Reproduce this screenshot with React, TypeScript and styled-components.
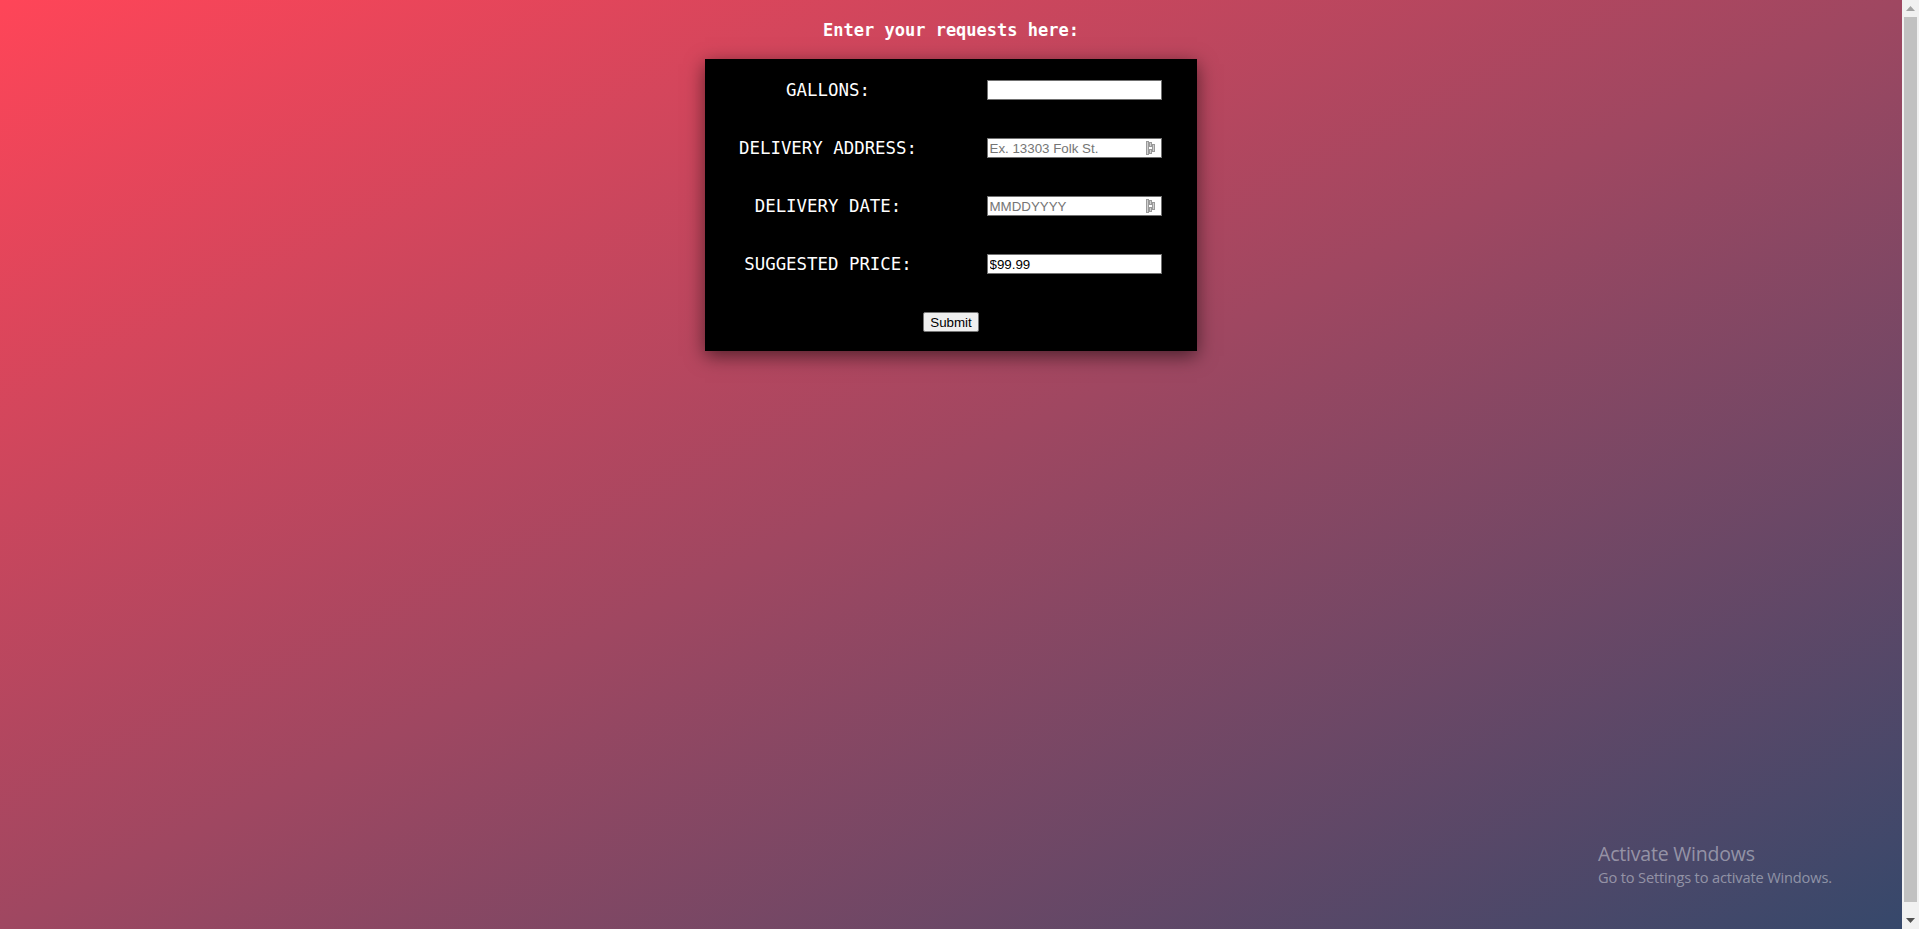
import React from "react";
import styled, { createGlobalStyle } from "styled-components";

const GlobalStyle = createGlobalStyle`
  html, body {
    margin: 0;
    padding: 0;
    height: 100%;
    overflow: hidden;
    background: #f1f1f1;
  }
`;

const Screen = styled.div`
  display: flex;
  height: 100vh;
  width: 100%;
`;

const Page = styled.main`
  flex: 1;
  display: flex;
  flex-direction: column;
  align-items: center;
  box-sizing: border-box;
  padding-top: 20px;
  background: linear-gradient(to bottom right, #ff4558 0%, #9f4761 50%, #36486b 100%);
  position: relative;
`;

const Scrollbar = styled.div`
  width: 17px;
  flex: none;
  display: flex;
  flex-direction: column;
  background: #f1f1f1;
`;

const ScrollButton = styled.div`
  height: 17px;
  display: flex;
  align-items: center;
  justify-content: center;
`;

const ScrollTrack = styled.div`
  flex: 1;
  padding: 0 2px 10px;
  display: flex;
`;

const ScrollThumb = styled.div`
  flex: 1;
  background: #c1c1c1;
`;

const Title = styled.h1`
  margin: 0;
  font-family: "DejaVu Sans Mono", "Liberation Mono", monospace;
  font-weight: 700;
  font-size: 17px;
  line-height: 20px;
  color: #ffffff;
`;

const FormBox = styled.form`
  margin-top: 19px;
  width: 492px;
  box-sizing: border-box;
  padding-top: 2px;
  background: #000000;
  box-shadow: 0 5px 18px rgba(0, 0, 0, 0.55);
  display: grid;
  grid-template-columns: 246px 246px;
  grid-auto-rows: 58px;
`;

const Label = styled.label`
  display: flex;
  align-items: center;
  justify-content: center;
  font-family: "DejaVu Sans Mono", "Liberation Mono", monospace;
  font-size: 17.4px;
  color: #ffffff;
  white-space: pre;
`;

const Cell = styled.div`
  display: flex;
  align-items: center;
  justify-content: center;
`;

const InputWrap = styled.div`
  position: relative;
  width: 175px;
  height: 20px;
`;

const Input = styled.input`
  box-sizing: border-box;
  width: 175px;
  height: 20px;
  margin: 0;
  padding: 1px 2px;
  border: 1px solid #707070;
  background: #ffffff;
  font-family: "Liberation Sans", Arial, sans-serif;
  font-size: 13.33px;
  color: #000000;
  outline: none;
  &::placeholder {
    color: #757575;
  }
`;

const FieldIcon = styled.svg`
  position: absolute;
  right: 6px;
  top: 3px;
`;

const SubmitCell = styled.div`
  grid-column: 1 / span 2;
  display: flex;
  align-items: center;
  justify-content: center;
`;

const SubmitButton = styled.button`
  box-sizing: border-box;
  width: 56px;
  height: 20px;
  margin: 0;
  padding: 0 6px;
  border: 1px solid #767676;
  border-radius: 2px;
  background: #efefef;
  font-family: "Liberation Sans", Arial, sans-serif;
  font-size: 13.33px;
  color: #000000;
`;

const Watermark = styled.div`
  position: absolute;
  left: 1598px;
  top: 841px;
  font-family: "Open Sans", "Noto Sans", sans-serif;
  color: rgba(255, 255, 255, 0.42);
  pointer-events: none;
`;

const WatermarkTitle = styled.div`
  font-size: 19.5px;
  line-height: 26px;
  letter-spacing: -0.2px;
`;

const WatermarkSub = styled.div`
  font-size: 14.6px;
  line-height: 20px;
  letter-spacing: -0.15px;
`;

const AutofillIcon = () => (
  <FieldIcon width="10" height="14" viewBox="0 0 10 14">
    <rect x="0.5" y="0.5" width="2" height="13" fill="#d0d0d0" stroke="#9a9a9a" strokeWidth="1" />
    <rect x="3.5" y="1.5" width="2" height="4" fill="#d0d0d0" stroke="#9a9a9a" strokeWidth="1" />
    <rect x="3.5" y="8.5" width="2" height="4" fill="#d0d0d0" stroke="#9a9a9a" strokeWidth="1" />
    <rect x="6.5" y="3.5" width="2" height="7" fill="#d0d0d0" stroke="#9a9a9a" strokeWidth="1" />
  </FieldIcon>
);

type FieldProps = {
  label: string;
  placeholder?: string;
  defaultValue?: string;
  icon?: boolean;
};

const Field = ({ label, placeholder, defaultValue, icon }: FieldProps) => (
  <>
    <Label>{label}</Label>
    <Cell>
      <InputWrap>
        <Input type="text" placeholder={placeholder} defaultValue={defaultValue} />
        {icon && <AutofillIcon />}
      </InputWrap>
    </Cell>
  </>
);

export default function App() {
  return (
    <>
      <GlobalStyle />
      <Screen>
        <Page>
          <Title>Enter your requests here:</Title>
          <FormBox onSubmit={(e) => e.preventDefault()}>
            <Field label="GALLONS:" />
            <Field label="DELIVERY ADDRESS:" placeholder="Ex. 13303 Folk St." icon />
            <Field label="DELIVERY DATE:" placeholder="MMDDYYYY" icon />
            <Field label="SUGGESTED PRICE:" defaultValue="$99.99" />
            <SubmitCell>
              <SubmitButton type="submit">Submit</SubmitButton>
            </SubmitCell>
          </FormBox>
          <Watermark>
            <WatermarkTitle>Activate Windows</WatermarkTitle>
            <WatermarkSub>Go to Settings to activate Windows.</WatermarkSub>
          </Watermark>
        </Page>
        <Scrollbar>
          <ScrollButton>
            <svg width="9" height="5" viewBox="0 0 9 5">
              <polygon points="0,5 4.5,0 9,5" fill="#a3a3a3" />
            </svg>
          </ScrollButton>
          <ScrollTrack>
            <ScrollThumb />
          </ScrollTrack>
          <ScrollButton>
            <svg width="9" height="5" viewBox="0 0 9 5">
              <polygon points="0,0 4.5,5 9,0" fill="#505050" />
            </svg>
          </ScrollButton>
        </Scrollbar>
      </Screen>
    </>
  );
}
